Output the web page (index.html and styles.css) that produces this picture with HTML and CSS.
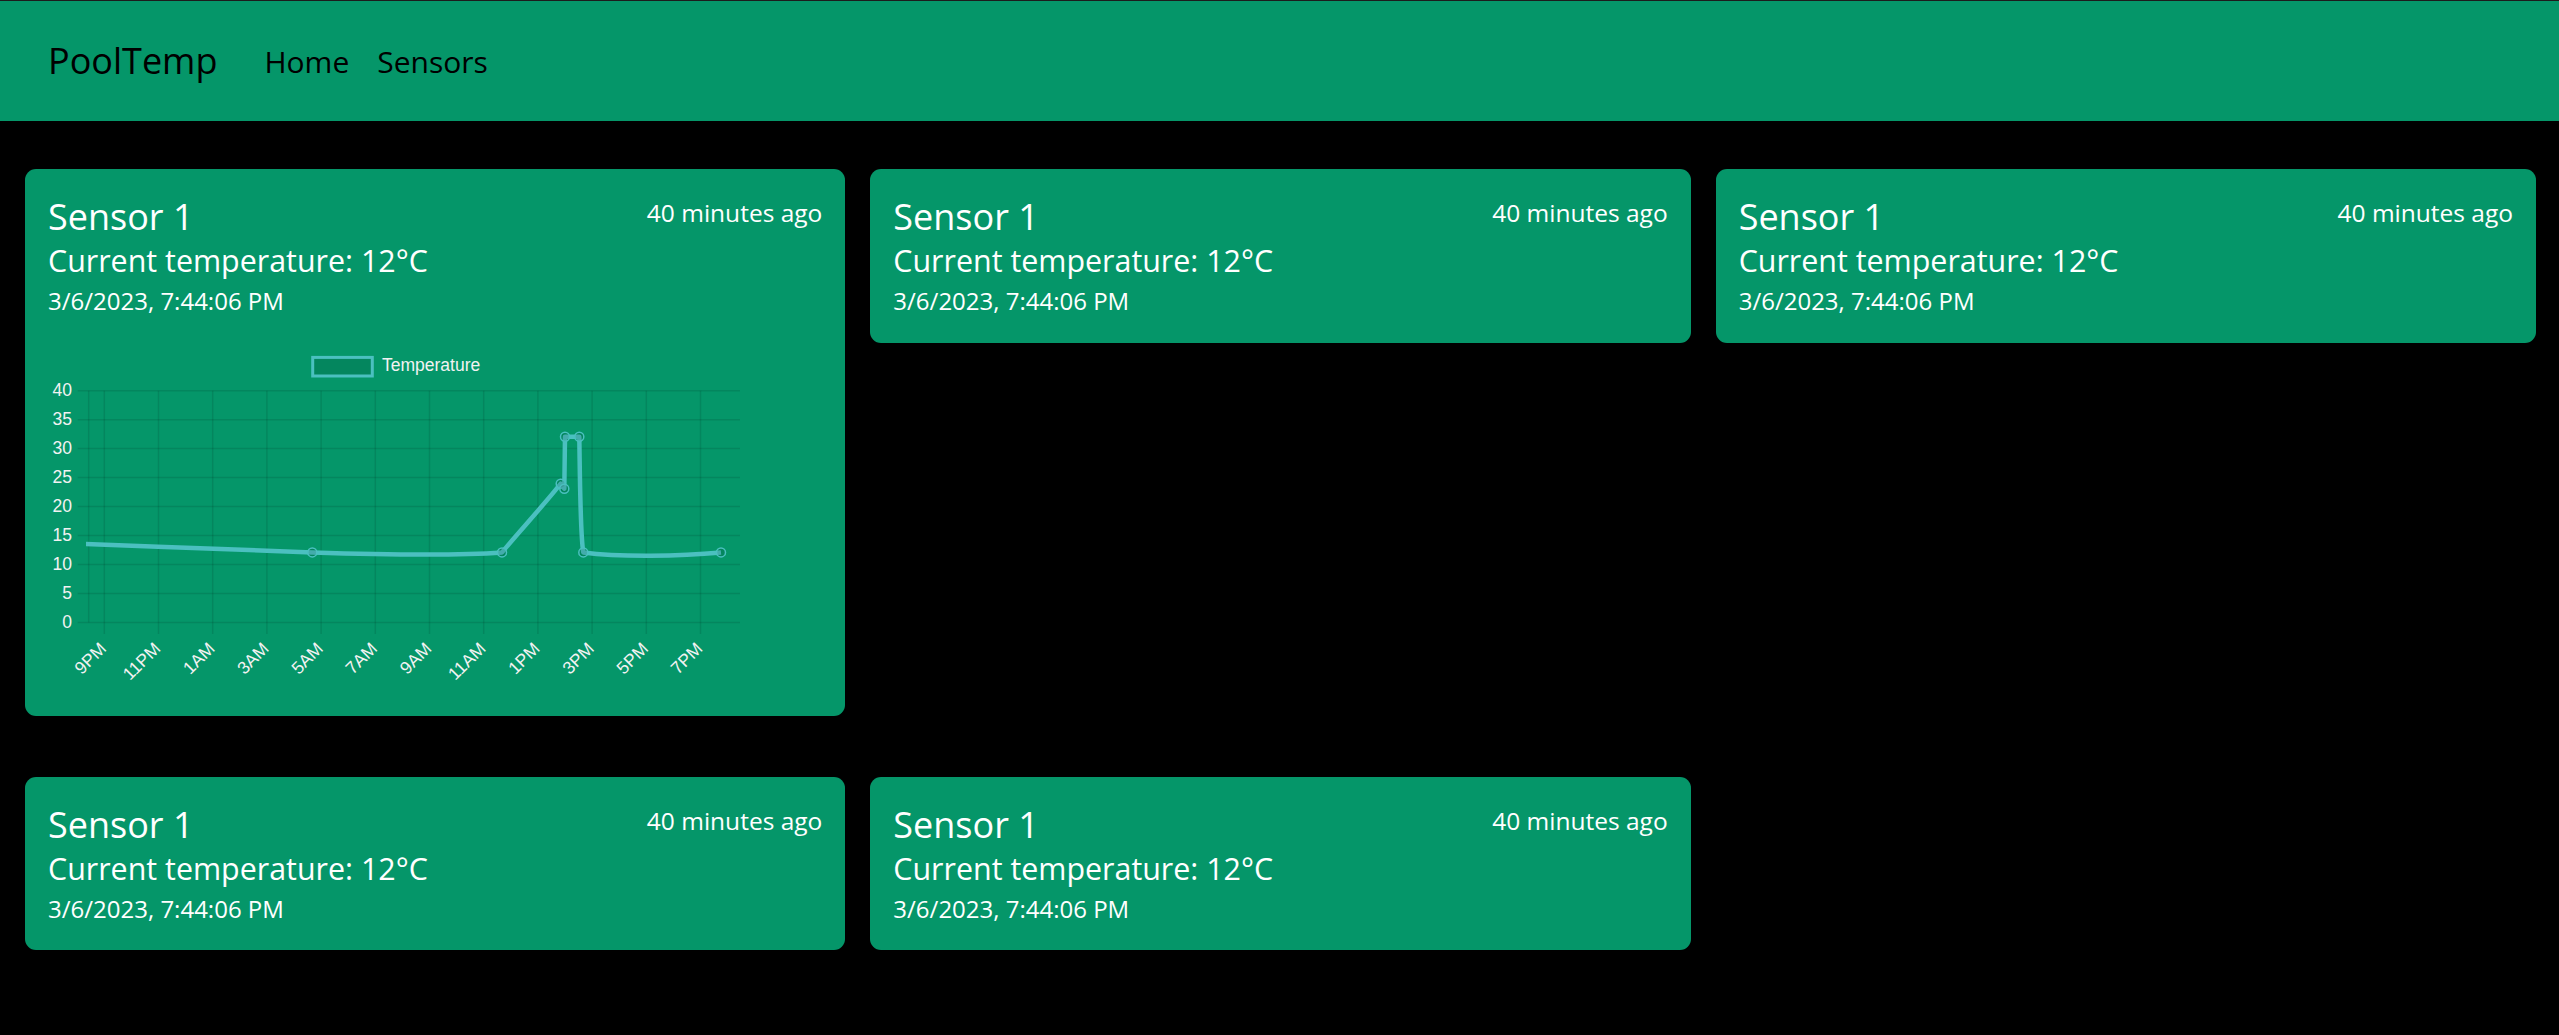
FILE: index.html
```html
<!DOCTYPE html>
<html lang="en">
<head>
<meta charset="utf-8">
<title>PoolTemp</title>
<link rel="stylesheet" href="styles.css">
</head>
<body>
<nav class="navbar">
  <a class="brand" href="#">PoolTemp</a>
  <div class="nav-links">
    <a class="nav-link" href="#">Home</a>
    <a class="nav-link" href="#">Sensors</a>
  </div>
</nav>
<main class="grid">
  <section class="card">
    <div class="card-head">
      <h2 class="title">Sensor 1</h2>
      <span class="ago">40 minutes ago</span>
    </div>
    <div class="temp">Current temperature: 12°C</div>
    <div class="date">3/6/2023, 7:44:06 PM</div>
    <svg class="chart" width="770" height="373" viewBox="0 0 770 373" xmlns="http://www.w3.org/2000/svg">
      <defs>
        <clipPath id="area"><rect x="86" y="380" width="660" height="250"/></clipPath>
      </defs>
      <g transform="translate(-48 -319.3)">
        <!-- legend -->
        <rect x="312.7" y="357.7" width="59.6" height="18.6" fill="rgba(0,0,0,0.1)" stroke="#4bc0c0" stroke-width="3"/>
        <text class="ct" x="382" y="371.7">Temperature</text>
        <!-- grid -->
        <g stroke="rgba(0,0,0,0.1)" stroke-width="1.5">
          <line x1="77.7" y1="391" x2="740" y2="391"/>
          <line x1="77.7" y1="420" x2="740" y2="420"/>
          <line x1="77.7" y1="448.9" x2="740" y2="448.9"/>
          <line x1="77.7" y1="477.9" x2="740" y2="477.9"/>
          <line x1="77.7" y1="506.8" x2="740" y2="506.8"/>
          <line x1="77.7" y1="535.8" x2="740" y2="535.8"/>
          <line x1="77.7" y1="564.8" x2="740" y2="564.8"/>
          <line x1="77.7" y1="593.7" x2="740" y2="593.7"/>
          <line x1="77.7" y1="622.7" x2="740" y2="622.7"/>
          <line x1="88.7" y1="391" x2="88.7" y2="622.7"/>
          <line x1="104.3" y1="391" x2="104.3" y2="634.3"/>
          <line x1="158.5" y1="391" x2="158.5" y2="634.3"/>
          <line x1="212.7" y1="391" x2="212.7" y2="634.3"/>
          <line x1="266.9" y1="391" x2="266.9" y2="634.3"/>
          <line x1="321.1" y1="391" x2="321.1" y2="634.3"/>
          <line x1="375.3" y1="391" x2="375.3" y2="634.3"/>
          <line x1="429.5" y1="391" x2="429.5" y2="634.3"/>
          <line x1="483.7" y1="391" x2="483.7" y2="634.3"/>
          <line x1="537.9" y1="391" x2="537.9" y2="634.3"/>
          <line x1="592.1" y1="391" x2="592.1" y2="634.3"/>
          <line x1="646.3" y1="391" x2="646.3" y2="634.3"/>
          <line x1="700.5" y1="391" x2="700.5" y2="634.3"/>
        </g>
        <!-- y labels -->
        <g class="ct" text-anchor="end">
          <text x="72" y="396.5">40</text>
          <text x="72" y="425.5">35</text>
          <text x="72" y="454.4">30</text>
          <text x="72" y="483.4">25</text>
          <text x="72" y="512.3">20</text>
          <text x="72" y="541.3">15</text>
          <text x="72" y="570.3">10</text>
          <text x="72" y="599.2">5</text>
          <text x="72" y="628.2">0</text>
        </g>
        <!-- x labels -->
        <g class="ct" text-anchor="end">
          <text transform="translate(107.3 650) rotate(-45)">9PM</text>
          <text transform="translate(161.5 650) rotate(-45)">11PM</text>
          <text transform="translate(215.7 650) rotate(-45)">1AM</text>
          <text transform="translate(269.9 650) rotate(-45)">3AM</text>
          <text transform="translate(324.1 650) rotate(-45)">5AM</text>
          <text transform="translate(378.3 650) rotate(-45)">7AM</text>
          <text transform="translate(432.5 650) rotate(-45)">9AM</text>
          <text transform="translate(486.7 650) rotate(-45)">11AM</text>
          <text transform="translate(540.9 650) rotate(-45)">1PM</text>
          <text transform="translate(595.1 650) rotate(-45)">3PM</text>
          <text transform="translate(649.3 650) rotate(-45)">5PM</text>
          <text transform="translate(703.5 650) rotate(-45)">7PM</text>
        </g>
        <!-- data line -->
        <g clip-path="url(#area)">
          <path d="M 70 543.6 C 150 546.5, 250 551, 312.3 552.7 C 380 554.8, 450 556.4, 502 552.7 C 512 540, 545 504, 560.7 484 L 564.3 489 C 564.6 470, 564.8 450, 565 437 L 579.3 437 C 580 480, 580.2 535, 583.3 552.7 C 620 557.5, 680 556.5, 721 552.7" fill="none" stroke="#4bc0c0" stroke-width="4.5" stroke-linejoin="round"/>
        </g>
        <g fill="rgba(0,0,0,0.1)" stroke="#4bc0c0" stroke-width="1.5">
          <circle cx="312.3" cy="552.7" r="4.5"/>
          <circle cx="502" cy="552.7" r="4.5"/>
          <circle cx="560.7" cy="484" r="4.5"/>
          <circle cx="564.3" cy="489" r="4.5"/>
          <circle cx="565" cy="437" r="4.5"/>
          <circle cx="579.3" cy="437" r="4.5"/>
          <circle cx="583.3" cy="552.7" r="4.5"/>
          <circle cx="721" cy="552.7" r="4.5"/>
        </g>
      </g>
    </svg>
  </section>
  <section class="card">
    <div class="card-head">
      <h2 class="title">Sensor 1</h2>
      <span class="ago">40 minutes ago</span>
    </div>
    <div class="temp">Current temperature: 12°C</div>
    <div class="date">3/6/2023, 7:44:06 PM</div>
  </section>
  <section class="card">
    <div class="card-head">
      <h2 class="title">Sensor 1</h2>
      <span class="ago">40 minutes ago</span>
    </div>
    <div class="temp">Current temperature: 12°C</div>
    <div class="date">3/6/2023, 7:44:06 PM</div>
  </section>
  <section class="card">
    <div class="card-head">
      <h2 class="title">Sensor 1</h2>
      <span class="ago">40 minutes ago</span>
    </div>
    <div class="temp">Current temperature: 12°C</div>
    <div class="date">3/6/2023, 7:44:06 PM</div>
  </section>
  <section class="card">
    <div class="card-head">
      <h2 class="title">Sensor 1</h2>
      <span class="ago">40 minutes ago</span>
    </div>
    <div class="temp">Current temperature: 12°C</div>
    <div class="date">3/6/2023, 7:44:06 PM</div>
  </section>
</main>
</body>
</html>
```
FILE: styles.css
```css
* {
  box-sizing: border-box;
}

html, body {
  margin: 0;
  padding: 0;
  background: #000;
}

body {
  font-family: "Open Sans", "Noto Sans", "Liberation Sans", sans-serif;
  min-height: 1035px;
}

.navbar {
  display: flex;
  align-items: flex-start;
  height: 121px;
  border-top: 1px solid #1c1c1c;
  background: #059669;
  padding: 33.3px 0 0 48px;
}

.brand {
  font-size: 36px;
  line-height: 54px;
  color: #000;
  text-decoration: none;
  margin-right: 47px;
}

.nav-links {
  display: flex;
  gap: 28px;
  margin-top: 4.9px;
}

.nav-link {
  font-size: 30px;
  line-height: 45px;
  color: #000;
  text-decoration: none;
}

.grid {
  display: grid;
  grid-template-columns: repeat(3, 1fr);
  align-items: start;
  column-gap: 25px;
  row-gap: 61px;
  padding: 48px 23px 0 25px;
}

.card {
  background: #059669;
  color: #fff;
  border-radius: 11px;
  padding: 26px 23px 23.5px;
}

.card-head {
  display: flex;
  justify-content: space-between;
  align-items: flex-start;
}

.title {
  font-size: 36px;
  line-height: 43px;
  font-weight: 400;
  margin: 0 0 3px;
}

.ago {
  font-size: 24.5px;
  line-height: 36px;
}

.temp {
  font-size: 30.4px;
  line-height: 40.2px;
  margin-bottom: 1.8px;
}

.date {
  font-size: 24px;
  line-height: 36px;
}

.chart {
  display: block;
}

.ct {
  font-family: "Liberation Sans", Arial, sans-serif;
  font-size: 17.5px;
  fill: #f2f2f2;
}
```
